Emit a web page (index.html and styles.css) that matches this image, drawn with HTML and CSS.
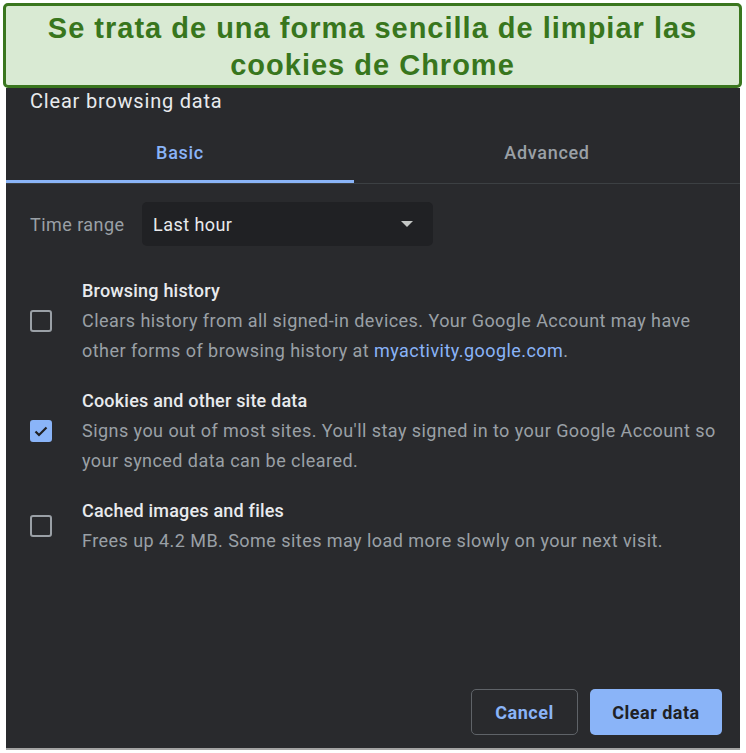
FILE: index.html
```html
<!DOCTYPE html>
<html lang="es">
<head>
    <meta charset="UTF-8">
    <meta name="viewport" content="width=device-width, initial-scale=1.0">
    <title>Clear browsing data</title>
    <link rel="stylesheet" href="styles.css">
</head>
<body>

<div class="banner">
    Se trata de una forma sencilla de limpiar las<br>cookies de Chrome
</div>

<div class="dialog">
    <div class="dialog-title">Clear browsing data</div>

    <div class="tabs">
        <div class="tab active">Basic</div>
        <div class="tab">Advanced</div>
    </div>

    <div class="time-range">
        <span class="label">Time range</span>
        <div class="select">
            <span>Last hour</span>
            <span class="arrow"></span>
        </div>
    </div>

    <div class="options">
        <div class="option">
            <span class="checkbox"></span>
            <div class="option-text">
                <div class="option-title">Browsing history</div>
                <div class="option-desc">Clears history from all signed-in devices. Your Google Account may have other forms of browsing history at <a href="#">myactivity.google.com</a>.</div>
            </div>
        </div>
        <div class="option">
            <span class="checkbox checked">
                <svg width="16" height="16" viewBox="0 0 16 16"><path d="M2.5 8.5l3.5 3.5 7.5-7.5" fill="none" stroke="#202124" stroke-width="2.2"/></svg>
            </span>
            <div class="option-text">
                <div class="option-title">Cookies and other site data</div>
                <div class="option-desc">Signs you out of most sites. You'll stay signed in to your Google Account so your synced data can be cleared.</div>
            </div>
        </div>
        <div class="option">
            <span class="checkbox"></span>
            <div class="option-text">
                <div class="option-title">Cached images and files</div>
                <div class="option-desc">Frees up 4.2 MB. Some sites may load more slowly on your next visit.</div>
            </div>
        </div>
    </div>

    <div class="footer">
        <button class="btn btn-cancel">Cancel</button>
        <button class="btn btn-primary">Clear data</button>
    </div>
</div>

</body>
</html>
```

FILE: styles.css
```css
body {
    margin: 0;
    background-color: #fff;
    font-family: Roboto, "Liberation Sans", Arial, sans-serif;
}
.banner {
    margin: 3px 0 0 3px;
    width: 733px;
    height: 75px;
    padding-top: 4px;
    box-sizing: content-box;
    border: 3px solid #3a761e;
    border-radius: 5px;
    background-color: #d9ead3;
    color: #38761d;
    font-family: "Liberation Sans", Arial, sans-serif;
    font-weight: bold;
    font-size: 29px;
    letter-spacing: 1px;
    line-height: 37px;
    text-align: center;
}
.dialog {
    margin-left: 6px;
    width: 734px;
    height: 660px;
    background-color: #292a2d;
    border-bottom: 2px solid #a3a3a3;
    display: flex;
    flex-direction: column;
    color: #e8eaed;
    letter-spacing: 0.45px;
}
.dialog-title {
    padding: 1px 0 0 24px;
    font-size: 20px;
    letter-spacing: 0.8px;
    line-height: 24px;
}
.tabs {
    margin-top: 13px;
    display: flex;
    border-bottom: 1px solid #3c4043;
}
.tab {
    height: 54px;
    line-height: 54px;
    text-align: center;
    font-size: 18px;
    font-weight: 500;
    letter-spacing: 0.7px;
    color: #9aa0a6;
    flex: 1;
    border-bottom: 3px solid transparent;
}
.tab.active {
    flex: 0 0 348px;
    color: #8ab4f8;
    border-bottom-color: #8ab4f8;
}
.time-range {
    margin-top: 18px;
    padding-left: 24px;
    display: flex;
    align-items: center;
}
.label {
    width: 112px;
    font-size: 18px;
    color: #9aa0a6;
}
.select {
    width: 291px;
    height: 44px;
    box-sizing: border-box;
    padding: 0 20px 0 11px;
    border-radius: 5px;
    background-color: #202124;
    display: flex;
    align-items: center;
    justify-content: space-between;
    font-size: 18px;
    color: #e8eaed;
}
.arrow {
    width: 0;
    height: 0;
    border-left: 6px solid transparent;
    border-right: 6px solid transparent;
    border-top: 6px solid #c4c7c5;
}
.options {
    margin-top: 30px;
    padding-left: 24px;
    display: flex;
    flex-direction: column;
    gap: 21px;
}
.option {
    display: flex;
    align-items: center;
}
.checkbox {
    flex: 0 0 auto;
    width: 22px;
    height: 22px;
    box-sizing: border-box;
    border: 2px solid #9aa0a6;
    border-radius: 3px;
    margin-right: 30px;
    display: flex;
    align-items: center;
    justify-content: center;
}
.checkbox.checked {
    border-color: #8ab4f8;
    background-color: #8ab4f8;
}
.option-text {
    font-size: 18px;
    line-height: 30px;
    width: 645px;
}
.option-title {
    color: #e8eaed;
    font-weight: 500;
    letter-spacing: 0.2px;
}
.option-desc {
    color: #9aa0a6;
    line-height: 29.5px;
}
.option-desc a {
    color: #8ab4f8;
    text-decoration: none;
}
.footer {
    margin-top: auto;
    padding: 0 18px 13px 0;
    display: flex;
    justify-content: flex-end;
    gap: 12px;
}
.btn {
    height: 46px;
    border-radius: 5px;
    font-family: Roboto, "Liberation Sans", Arial, sans-serif;
    font-size: 18px;
    font-weight: bold;
    letter-spacing: 0.5px;
    cursor: pointer;
}
.btn-cancel {
    width: 107px;
    background-color: transparent;
    border: 1px solid #5f6368;
    color: #8ab4f8;
}
.btn-primary {
    width: 132px;
    background-color: #8ab4f8;
    border: none;
    color: #202124;
}
```
